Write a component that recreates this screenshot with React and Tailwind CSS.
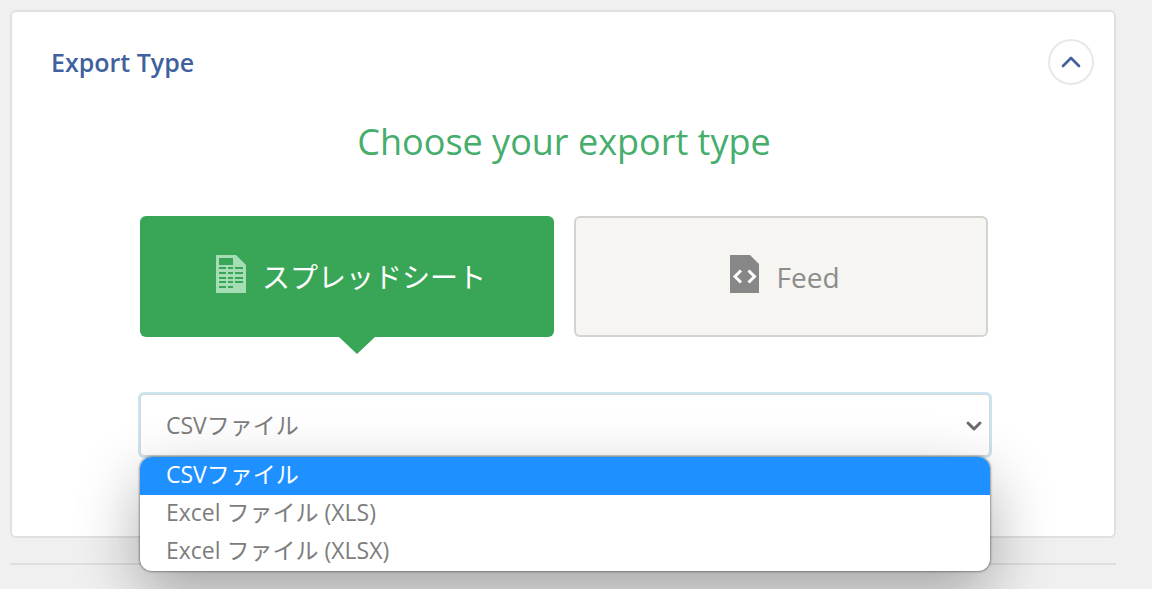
import { useState } from 'react'
import { ChevronDown, ChevronUp } from 'lucide-react'

const FILE_TYPES = [
  { value: 'csv', label: 'CSVファイル' },
  { value: 'xls', label: 'Excel ファイル (XLS)' },
  { value: 'xlsx', label: 'Excel ファイル (XLSX)' },
]

function SpreadsheetIcon() {
  return (
    <svg viewBox="0 0 30 38" className="mb-1.5 h-[38px] w-[30px] shrink-0" aria-hidden="true">
      <path d="M0 0h20l10 10v28H0z" fill="#a5ddb5" />
      <path
        d="M3 3h14v7H3zM3 12h7v2H3zM12 12h5v2h-5zM19 12h8v2h-8zM3 17h7v2H3zM12 17h5v2h-5zM19 17h8v2h-8zM3 22h7v2H3zM12 22h5v2h-5zM19 22h8v2h-8zM3 26h7v2H3zM12 26h5v2h-5zM19 26h8v2h-8zM3 31h7v2H3zM12 31h5v2h-5z"
        fill="#39a657"
      />
    </svg>
  )
}

function FeedIcon() {
  return (
    <svg viewBox="0 0 30 38" className="mb-1.5 h-[38px] w-[30px] shrink-0" aria-hidden="true">
      <path d="M0 0h20l9 9v29H0z" fill="#878787" />
      <path
        d="M11 15.500L5 21.500l6 6M18.500 15.500l6 6-6 6"
        fill="none"
        stroke="#fff"
        strokeWidth="3"
      />
    </svg>
  )
}

export default function App() {
  const [exportType, setExportType] = useState('spreadsheet')
  const [fileType, setFileType] = useState('csv')
  const isSheet = exportType === 'spreadsheet'

  return (
    <main className="min-h-screen overflow-hidden bg-[#f0f0f0] pt-2.5 pr-9 pl-2.5 font-['Open_Sans','Noto_Sans_CJK_JP',sans-serif]">
      <section className="rounded-md border-2 border-[#e0e0e0] bg-white pb-20">
        <header className="flex items-center justify-between pt-[27px] pr-5 pl-[39px]">
          <h2 className="text-[25px] leading-9 font-semibold text-[#40619d]">Export Type</h2>
          <button
            type="button"
            aria-label="Collapse"
            className="flex h-[46px] w-[46px] items-center justify-center rounded-full border-2 border-[#e8e8e8] text-[#40619d]"
          >
            <ChevronUp className="h-8 w-8" strokeWidth={2} />
          </button>
        </header>

        <div className="pr-[124px] pl-32">
          <h1 className="pt-[33px] pr-0.5 text-center text-4xl leading-[48px] text-[#46ad6d]">
            Choose your export type
          </h1>

          {/* Export type */}
          <div className="grid grid-cols-2 gap-5 pt-[50px] pr-0.5">
            <button
              type="button"
              aria-pressed={isSheet}
              onClick={() => setExportType('spreadsheet')}
              className="relative flex h-[121px] items-center justify-center gap-4 rounded-md bg-[#39a657] pl-2 text-[28px] text-white"
            >
              <SpreadsheetIcon />
              スプレッドシート
              {isSheet && (
                <svg
                  viewBox="0 0 36 17"
                  className="absolute top-full left-[199px] h-[17px] w-9"
                  aria-hidden="true"
                >
                  <path d="M0 0h36L18 17z" fill="#39a657" />
                </svg>
              )}
            </button>
            <button
              type="button"
              aria-pressed={!isSheet}
              onClick={() => setExportType('feed')}
              className="flex h-[121px] items-center justify-center gap-4 rounded-md border-2 border-[#d3d3d0] bg-[#f6f5f1] pl-2 text-[28px] text-[#8c8c8c]"
            >
              <FeedIcon />
              Feed
            </button>
          </div>

          {/* File type */}
          <div className="relative mt-[57px] text-[23px] text-[#7d7d7d]">
            <select
              aria-label="File type"
              value={fileType}
              onChange={(e) => setFileType(e.target.value)}
              className="block h-[62px] w-full appearance-none rounded-sm border border-[#d8d8d8] bg-white pl-[25px] ring-2 ring-[#c9e5f2] outline-none"
            >
              {FILE_TYPES.map((t) => (
                <option key={t.value} value={t.value}>
                  {t.label}
                </option>
              ))}
            </select>
            <ChevronDown
              className="pointer-events-none absolute top-5 right-1 h-6 w-6 text-[#6b6b6b]"
              strokeWidth={3}
            />
            <ul
              role="listbox"
              aria-label="File type options"
              className="absolute inset-x-0 top-full mt-px overflow-hidden rounded-xl bg-white shadow-[0_0_2px_1px_rgba(0,0,0,0.35),0_24px_64px_rgba(0,0,0,0.32)]"
            >
              {FILE_TYPES.map((t) => (
                <li
                  key={t.value}
                  role="option"
                  aria-selected={t.value === fileType}
                  onClick={() => setFileType(t.value)}
                  className={`h-[38px] pl-[26px] leading-[34px] ${
                    t.value === fileType ? 'bg-[#1e90ff] text-white' : ''
                  }`}
                >
                  {t.label}
                </li>
              ))}
            </ul>
          </div>
        </div>
      </section>
      <hr className="mt-[25px] border-t-2 border-[#dedede]" />
    </main>
  )
}
